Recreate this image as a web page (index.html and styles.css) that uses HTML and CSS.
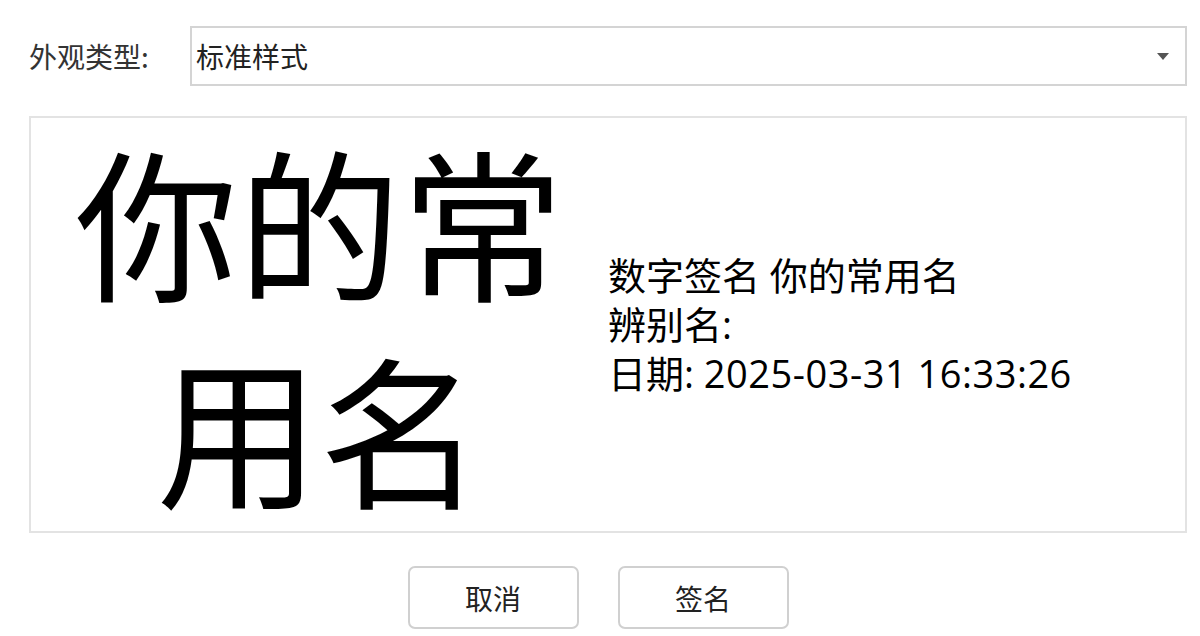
FILE: index.html
```html
<!DOCTYPE html>
<html lang="zh-CN">
<head>
<meta charset="utf-8">
<link rel="stylesheet" href="styles.css">
</head>
<body>
<div class="page">
  <div class="row">
    <label class="label">外观类型:</label>
    <div class="select">
      <span class="select-text">标准样式</span>
      <span class="arrow"></span>
    </div>
  </div>
  <div class="preview">
    <div class="name-col"><div class="big-name">你的常用名</div></div>
    <div class="info-col">
      <div class="info">数字签名 你的常用名<br>辨别名:<br>日期: <span class="date">2025-03-31 16:33:26</span></div>
    </div>
  </div>
  <div class="buttons">
    <button class="btn">取消</button>
    <button class="btn">签名</button>
  </div>
</div>
</body>
</html>
```
FILE: styles.css
```css
* { box-sizing: border-box; }
html, body { margin: 0; padding: 0; background: #fff; }
body {
  font-family: "Noto Sans CJK SC", "Noto Sans", sans-serif;
  color: #000;
}
.page {
  width: 1200px;
  height: 636px;
  padding: 26px 13px 0 29px;
}
.row {
  display: flex;
  align-items: center;
  height: 60px;
}
.label {
  width: 161px;
  font-size: 28px;
  color: #333;
}
.select {
  flex: 1;
  height: 60px;
  border: 2px solid #d4d4d4;
  display: flex;
  align-items: center;
  padding: 0 16px 0 4px;
}
.select-text {
  flex: 1;
  font-size: 28px;
  color: #222;
}
.arrow {
  width: 0;
  height: 0;
  border-left: 6px solid transparent;
  border-right: 6px solid transparent;
  border-top: 7px solid #555;
}
.preview {
  margin-top: 30px;
  width: 1158px;
  height: 417px;
  border: 2px solid #e3e3e3;
  display: flex;
}
.name-col {
  flex: 1;
  text-align: center;
  height: 413px;
}
.big-name {
  font-size: 163px;
  line-height: 207px;
  margin-top: -3px;
}
.info-col {
  flex: 1;
  display: flex;
  align-items: center;
}
.info {
  font-family: "Open Sans", "Noto Sans CJK SC", sans-serif;
  font-size: 38px;
  line-height: 49px;
}
.date {
  letter-spacing: 0.5px;
}
.buttons {
  display: flex;
  justify-content: center;
  gap: 39px;
  margin-top: 33px;
  padding-right: 20px;
}
.btn {
  width: 171px;
  height: 63px;
  border: 2px solid #d0d0d0;
  border-radius: 7px;
  background: #fff;
  font-family: "Noto Sans CJK SC", sans-serif;
  font-size: 28px;
  color: #222;
  padding: 0;
}
```
